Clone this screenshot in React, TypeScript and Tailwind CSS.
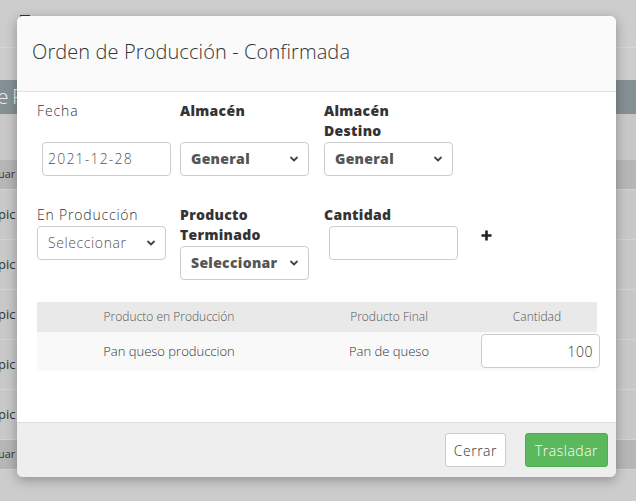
import React from "react";

const font = { fontFamily: '"Open Sans", "Liberation Sans", sans-serif' };

function Chevron() {
  return (
    <svg
      className="pointer-events-none absolute right-[10px] top-1/2 -translate-y-1/2"
      width="10"
      height="10"
      viewBox="0 0 10 10"
      fill="none"
      stroke="#444"
      strokeWidth="1.8"
      strokeLinecap="round"
      strokeLinejoin="round"
    >
      <path d="M2 3.5 5 6.5 8 3.5" />
    </svg>
  );
}

function Select({ value, bold }: { value: string; bold?: boolean }) {
  return (
    <div className="relative h-[34px] w-[129px]">
      <select
        defaultValue={value}
        className={`h-full w-full appearance-none rounded-[4px] border border-[#cccccc] bg-white pl-[10px] text-[14px] text-[#555] outline-none ${
          bold ? "font-extrabold tracking-[0.3px]" : "font-light tracking-[0.6px]"
        }`}
      >
        <option>{value}</option>
      </select>
      <Chevron />
    </div>
  );
}

function BgRow({ label, head }: { label: string; head?: boolean }) {
  return (
    <div
      className={`flex items-center border-b border-[#d3d3d3] text-[#333] ${
        head ? "h-[30px] bg-[#b6b6b6] text-[11px]" : "h-[50px] bg-[#c8c8c8] text-[13px]"
      }`}
    >
      <span className="-ml-[2px]">{label}</span>
    </div>
  );
}

export default function App() {
  return (
    <div className="relative h-[501px] w-[636px] overflow-hidden bg-[#cccccc]" style={font}>
      {/* dimmed page behind */}
      <div className="flex h-full flex-col">
        <div className="relative h-[48px] border-b border-[#d6d6d6] bg-[#cdcdcd]">
          <div className="absolute left-[20px] top-[15px] h-[3px] w-[10px] bg-[#333]" />
        </div>
        <div className="h-[32px] bg-[#cdcdcd]" />
        <div className="flex h-[34px] items-center bg-[#859095] text-[21px] font-light text-[#eef0f0]">
          <span className="-ml-[3px] tracking-[-1px]">e P</span>
        </div>
        <div className="h-[46px] bg-[#c8c8c8]" />
        <BgRow label="uar" head />
        <BgRow label="pic" />
        <BgRow label="pic" />
        <BgRow label="pic" />
        <BgRow label="pic" />
        <BgRow label="pic" />
        <BgRow label="uar" head />
        <div className="flex-1 bg-[#cccccc]" />
      </div>

      {/* modal */}
      <div className="absolute left-[17px] top-[16px] flex h-[461px] w-[599px] flex-col overflow-hidden rounded-[6px] bg-white shadow-[0_3px_12px_rgba(0,0,0,0.3)]">
        <div className="flex h-[76px] shrink-0 items-center border-b border-[#e2e2e2] bg-[#fafafa] px-[15px] pb-[3px]">
          <h1 className="text-[20px] font-light tracking-[0.1px] text-[#333]">
            Orden de Producción - Confirmada
          </h1>
        </div>

        <div className="flex-1 pl-[20px] pr-[16px] pt-[9px] text-[14px] text-[#333]">
          {/* row 1 */}
          <div className="grid grid-cols-[143px_144px_1fr] leading-[20px]">
            <div>
              <div className="h-[40px] font-light tracking-[0.9px]">Fecha</div>
              <div className="ml-[5px] mt-px flex h-[34px] w-[129px] items-center rounded-[4px] border border-[#cccccc] pl-[5px] font-light tracking-[1.2px] text-[#555]">
                2021-12-28
              </div>
            </div>
            <div>
              <div className="h-[40px] font-extrabold tracking-[0.3px]">Almacén</div>
              <div className="mt-px">
                <Select value="General" bold />
              </div>
            </div>
            <div>
              <div className="h-[40px] w-[90px] font-extrabold tracking-[0.3px]">Almacén Destino</div>
              <div className="mt-px">
                <Select value="General" bold />
              </div>
            </div>
          </div>

          {/* row 2 */}
          <div className="mt-[29px] grid grid-cols-[143px_144px_1fr] leading-[20px]">
            <div>
              <div className="h-[20px] font-light tracking-[0.8px]">En Producción</div>
              <div className="mt-px">
                <Select value="Seleccionar" />
              </div>
            </div>
            <div>
              <div className="h-[40px] w-[100px] font-extrabold tracking-[0.3px]">Producto Terminado</div>
              <div className="mt-px">
                <Select value="Seleccionar" bold />
              </div>
            </div>
            <div className="flex items-start">
              <div>
                <div className="h-[20px] font-extrabold tracking-[0.3px]">Cantidad</div>
                <div className="ml-[5px] mt-px h-[34px] w-[129px] rounded-[4px] border border-[#cccccc] bg-white" />
              </div>
              <svg className="ml-[23px] mt-[25px]" width="11" height="11" viewBox="0 0 11 11">
                <path d="M5.5 0.5v10M0.5 5.5h10" stroke="#222" strokeWidth="2.6" />
              </svg>
            </div>
          </div>

          {/* table */}
          <table className="mt-[22px] w-[560px] border-collapse text-center">
            <thead>
              <tr className="h-[30px] bg-[#e9e9e9] text-[12px] text-[#555]">
                <th className="w-[264px] font-light">Producto en Producción</th>
                <th className="w-[176px] font-light">Producto Final</th>
                <th className="font-light">Cantidad</th>
              </tr>
            </thead>
            <tbody>
              <tr className="h-[39px] bg-[#f9f9f9] text-[13px] font-light text-[#333]">
                <td>Pan queso produccion</td>
                <td>Pan de queso</td>
                <td className="relative">
                  <div className="absolute left-[4px] top-[2px] flex h-[34px] w-[119px] items-center justify-end rounded-[4px] border border-[#cccccc] bg-white pr-[6px] text-[14px] tracking-[0.5px]">
                    100
                  </div>
                </td>
              </tr>
            </tbody>
          </table>
        </div>

        <div className="flex h-[55px] shrink-0 items-center justify-end gap-[19px] border-t border-[#dcdcdc] bg-[#eeeeee] pr-[8px] text-[14px]">
          <button className="h-[34px] rounded-[3px] border border-[#cccccc] bg-white px-[8px] font-light tracking-[0.5px] text-[#333]">
            Cerrar
          </button>
          <button className="h-[34px] rounded-[3px] border border-[#4cae4c] bg-[#5cb85c] px-[9px] font-light tracking-[0.5px] text-white">
            Trasladar
          </button>
        </div>
      </div>
    </div>
  );
}
